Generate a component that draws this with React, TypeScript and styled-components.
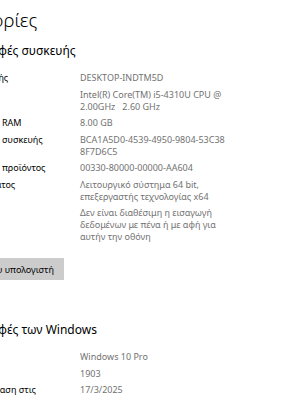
import styled, { createGlobalStyle } from "styled-components";

const GlobalStyle = createGlobalStyle`
  body {
    margin: 0;
    background: #ffffff;
    font-family: "Noto Sans", "Open Sans", sans-serif;
  }
`;

type Spec = { label: string; value: string[] };

const deviceSpecs: Spec[] = [
  { label: "Όνομα συσκευής", value: ["DESKTOP-INDTM5D"] },
  {
    label: "Επεξεργαστής",
    value: ["Intel(R) Core(TM) i5-4310U CPU @", "2.00GHz\u00a0\u00a0 2.60 GHz"],
  },
  { label: "Εγκατεστημένη RAM", value: ["8.00 GB"] },
  {
    label: "Αναγνωριστικό συσκευής",
    value: ["BCA1A5D0-4539-4950-9804-53C38", "8F7D6C5"],
  },
  { label: "Αναγνωριστικό προϊόντος", value: ["00330-80000-00000-AA604"] },
  {
    label: "Τύπος συστήματος",
    value: ["Λειτουργικό σύστημα 64 bit,", "επεξεργαστής τεχνολογίας x64"],
  },
  {
    label: "Πένα και αφή",
    value: [
      "Δεν είναι διαθέσιμη η εισαγωγή",
      "δεδομένων με πένα ή με αφή για",
      "αυτήν την οθόνη",
    ],
  },
];

const windowsSpecs: Spec[] = [
  { label: "Έκδοση", value: ["Windows 10 Pro"] },
  { label: "Έκδοση", value: ["1903"] },
  { label: "Έγινε εγκατάσταση στις", value: ["17/3/2025"] },
  { label: "Δομή λειτουργικού συστήματος", value: ["18362.1256"] },
];

function SpecList({ items }: { items: Spec[] }) {
  return (
    <Specs>
      {items.map((s, i) => (
        <Row key={i}>
          <Label>{s.label}</Label>
          <Value>
            {s.value.map((line, j) => (
              <Line key={j}>{line}</Line>
            ))}
          </Value>
        </Row>
      ))}
    </Specs>
  );
}

export default function App() {
  return (
    <Viewport>
      <GlobalStyle />
      <Page>
        <Title>Πληροφορίες</Title>
        <Heading $top={11}>Προδιαγραφές συσκευής</Heading>
        <SpecList items={deviceSpecs} />
        <RenameButton>Μετονομασία αυτού του υπολογιστή</RenameButton>
        <Heading $top={42}>Προδιαγραφές των Windows</Heading>
        <SpecList items={windowsSpecs} />
      </Page>
    </Viewport>
  );
}

const Viewport = styled.div`
  width: 300px;
  height: 400px;
  overflow: hidden;
  background: #ffffff;
`;

// the window is scrolled sideways, so the left part of the page is cut off
const Page = styled.main`
  display: flex;
  flex-direction: column;
  align-items: flex-start;
  margin-left: -64px;
  padding-top: 8px;
  color: #000000;
`;

const Title = styled.h1`
  margin: 0 0 0 -13px;
  font-size: 19px;
  line-height: 24px;
  font-weight: 300;
  white-space: nowrap;
`;

const Heading = styled.h2<{ $top: number }>`
  margin: ${(p) => p.$top}px 0 0;
  font-size: 12px;
  line-height: 16px;
  font-weight: 400;
  white-space: nowrap;
`;

const Specs = styled.dl`
  margin: 13px 0 0;
  display: flex;
  flex-direction: column;
  gap: 4.5px;
  font-size: 9px;
  line-height: 12px;
`;

const Row = styled.div`
  display: grid;
  grid-template-columns: 144px 1fr;
`;

const Label = styled.dt`
  margin: 0;
  color: #000000;
  white-space: nowrap;
`;

const Value = styled.dd`
  margin: 0;
  color: #727272;
  white-space: nowrap;
`;

const Line = styled.div``;

const RenameButton = styled.button`
  margin: 15px 0 0 -46px;
  height: 22px;
  padding: 0 10px;
  border: none;
  background: #cccccc;
  color: #000000;
  font-family: inherit;
  font-size: 9px;
  white-space: nowrap;
`;
